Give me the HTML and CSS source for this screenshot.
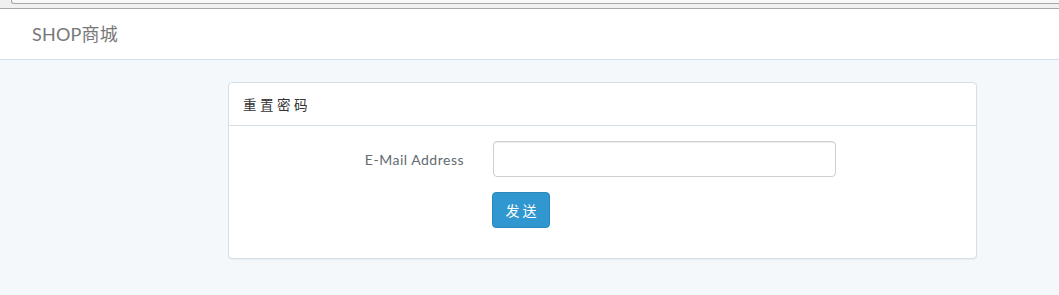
FILE: index.html
```html
<!DOCTYPE html>
<html lang="zh">
<head>
<meta charset="utf-8">
<title>SHOP商城</title>
<link rel="stylesheet" href="styles.css">
</head>
<body>
<div class="chrome"><div class="chrome-tab"></div></div>
<nav class="navbar">
  <a class="brand" href="#">SHOP商城</a>
</nav>
<main class="page">
  <section class="panel">
    <div class="panel-heading">重置密码</div>
    <form class="panel-body">
      <div class="form-row">
        <label class="form-label" for="email">E-Mail Address</label>
        <div class="form-field"><input id="email" class="form-input" type="email"></div>
      </div>
      <div class="form-row">
        <div class="form-label"></div>
        <div class="form-field"><button class="btn" type="button">发送</button></div>
      </div>
    </form>
  </section>
</main>
</body>
</html>
```
FILE: styles.css
```css
* { box-sizing: border-box; }
html, body { margin: 0; padding: 0; }
body {
  background: #f5f8fa;
  font-family: "Lato", "Noto Sans CJK SC", sans-serif;
  font-size: 14px;
  color: #636b6f;
  height: 295px;
  overflow: hidden;
}
.chrome {
  height: 9px;
  background: #f0f0f0;
  border-bottom: 1px solid #a8a8a8;
  padding-left: 11px;
}
.chrome-tab {
  height: 4px;
  background: #f7f7f7;
  border-left: 1px solid #a8a8a8;
  border-bottom: 1px solid #a8a8a8;
  border-bottom-left-radius: 3px;
}
.navbar {
  height: 51px;
  background: #fff;
  border-bottom: 1px solid #d3e0e9;
  display: flex;
  align-items: center;
  padding-left: 32px;
}
.brand {
  font-size: 18px;
  color: #777;
  text-decoration: none;
  padding-bottom: 2px;
  letter-spacing: 0.2px;
}
.page {
  padding: 22px 0 0 228px;
}
.panel {
  width: 749px;
  height: 177px;
  background: #fff;
  border: 1px solid #d3e0e9;
  border-radius: 4px;
  box-shadow: 0 1px 1px rgba(0,0,0,0.05);
}
.panel-heading {
  height: 43px;
  border-bottom: 1px solid #d3e0e9;
  padding: 0 14px;
  display: flex;
  align-items: center;
  color: #333;
  letter-spacing: 3.5px;
  font-size: 13.5px;
}
.panel-body {
  padding: 15px 0 0;
  margin: 0;
  display: flex;
  flex-direction: column;
  gap: 15px;
}
.form-row {
  display: flex;
  align-items: center;
}
.form-label {
  width: 235px;
  text-align: right;
  color: #636b6f;
  font-size: 14px;
  letter-spacing: 0.5px;
}
.form-field {
  padding-left: 29px;
}
.form-input {
  display: block;
  width: 343px;
  height: 36px;
  border: 1px solid #ccd0d2;
  border-radius: 4px;
  background: #fff;
  box-shadow: inset 0 1px 1px rgba(0,0,0,0.075);
  font-family: inherit;
  font-size: 14px;
  padding: 6px 12px;
}
.btn {
  display: block;
  height: 36px;
  width: 58px;
  border: 1px solid #2a88bd;
  border-radius: 4px;
  background: #3097d1;
  color: #fff;
  font-family: "Noto Sans CJK SC", sans-serif;
  font-size: 14px;
  letter-spacing: 3px;
  padding: 0 0 0 3px;
  margin-left: -1px;
}
```
